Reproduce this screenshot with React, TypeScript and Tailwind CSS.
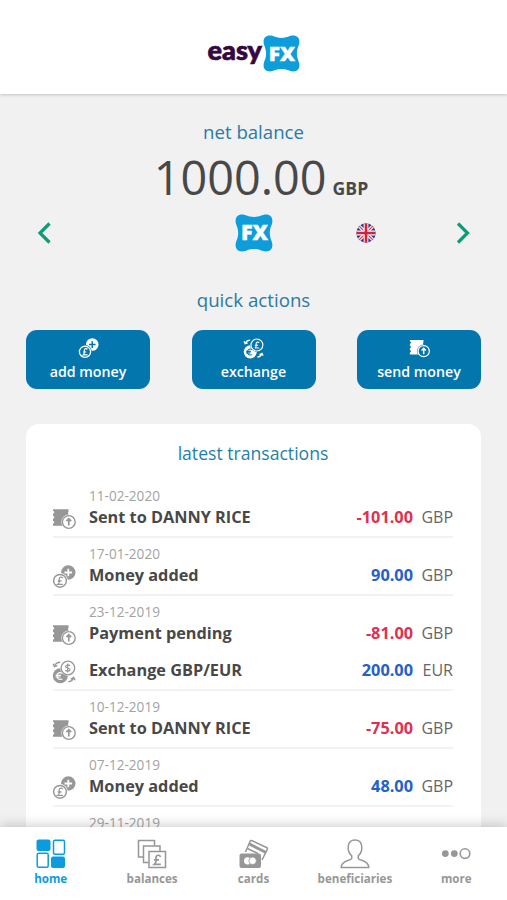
import type { ReactNode } from 'react';

type IconName = 'send' | 'add' | 'exchange';

type Transaction = {
  icon: IconName;
  title: string;
  amount: string;
  currency: string;
};

const groups: { date: string; items: Transaction[] }[] = [
  { date: '11-02-2020', items: [{ icon: 'send', title: 'Sent to DANNY RICE', amount: '-101.00', currency: 'GBP' }] },
  { date: '17-01-2020', items: [{ icon: 'add', title: 'Money added', amount: '90.00', currency: 'GBP' }] },
  {
    date: '23-12-2019',
    items: [
      { icon: 'send', title: 'Payment pending', amount: '-81.00', currency: 'GBP' },
      { icon: 'exchange', title: 'Exchange GBP/EUR', amount: '200.00', currency: 'EUR' },
    ],
  },
  { date: '10-12-2019', items: [{ icon: 'send', title: 'Sent to DANNY RICE', amount: '-75.00', currency: 'GBP' }] },
  { date: '07-12-2019', items: [{ icon: 'add', title: 'Money added', amount: '48.00', currency: 'GBP' }] },
  { date: '29-11-2019', items: [] },
];

function FxBadge({ className }: { className: string }) {
  return (
    <svg viewBox="0 0 38 38" className={className}>
      <path
        d="M7 0.6C11 0.6 13 3 19 3S27 0.6 31 0.6C35 0.6 37.4 3 37.4 7C37.4 11 34.8 13 34.8 19S37.4 27 37.4 31C37.4 35 35 37.4 31 37.4C27 37.4 25 35 19 35S11 37.4 7 37.4C3 37.4 0.6 35 0.6 31C0.6 27 3.2 25 3.2 19S0.6 11 0.6 7C0.6 3 3 0.6 7 0.6Z"
        fill="#0d9ddb"
      />
      <text x="6" y="26.4" textLength="27" lengthAdjust="spacingAndGlyphs" fontFamily="Open Sans, sans-serif" fontWeight="800" fontSize="20.5" fill="#fff" stroke="#fff" strokeWidth="0.4">
        FX
      </text>
    </svg>
  );
}

function UkFlag() {
  return (
    <svg viewBox="0 0 20 20" className="size-5">
      <clipPath id="flag">
        <circle cx="10" cy="10" r="9.7" />
      </clipPath>
      <g clipPath="url(#flag)">
        <rect width="20" height="20" fill="#2f3c8c" />
        <path d="M0 0L20 20M20 0L0 20" stroke="#f3eef3" strokeWidth="3.4" />
        <path d="M0 0L20 20M20 0L0 20" stroke="#d3374f" strokeWidth="1.1" />
        <path d="M10 0V20M0 10H20" stroke="#f8f4f6" strokeWidth="4.8" />
        <path d="M10 0V20M0 10H20" stroke="#d4213d" strokeWidth="2.6" />
      </g>
    </svg>
  );
}

function Chevron({ d }: { d: string }) {
  return (
    <svg viewBox="0 0 16 24" className="h-6 w-4" fill="none">
      <path d={d} stroke="#0f9b78" strokeWidth="3.2" />
    </svg>
  );
}

// bg fills the gaps where one part of a glyph overlaps another
function MoneyIcon({ name, bg, className, symbol = '$' }: { name: IconName; bg: string; className: string; symbol?: string }) {
  if (name === 'send') {
    return (
      <svg viewBox="0 0 24 24" className={className} fill="none">
        <path d="M1 2.2H16.5V5L15.9 6L16.5 7V18.8H1V16.8L2.2 15.8V14.8L1 13.8V11.8L2.2 10.8V9.8L1 8.8V6.8L2.2 5.8V4.8L1 3.8Z" fill="currentColor" />
        <circle cx="16.8" cy="15" r="7.5" fill={bg} />
        <circle cx="16.8" cy="15" r="6.4" stroke="currentColor" strokeWidth="1.4" />
        <path d="M16.8 18.6V12.2M14.4 14.2L16.8 11.8L19.2 14.2" stroke="currentColor" strokeWidth="1.7" />
      </svg>
    );
  }
  if (name === 'add') {
    return (
      <svg viewBox="0 0 24 24" className={className} fill="none">
        <circle cx="16.3" cy="7.5" r="7.2" fill="currentColor" />
        <path d="M16.3 3.7V11.3M12.5 7.5H20.1" stroke={bg} strokeWidth="1.8" />
        <circle cx="8" cy="15.8" r="7.8" fill={bg} />
        <circle cx="8" cy="15.8" r="6.4" stroke="currentColor" strokeWidth="1.5" />
        <path d="M10.7 13.2C10.2 11.7 7.2 11.6 7.2 14C7.2 16 8.1 17.9 5.8 19.3H11M5.7 16H9.5" stroke="currentColor" strokeWidth="1.3" />
      </svg>
    );
  }
  return (
    <svg viewBox="0 0 24 24" className={className} fill="none">
      <circle cx="8.3" cy="15.8" r="7.5" fill="currentColor" />
      <path d="M10.5 13.2C6.3 11.6 5 14 5 16S6.4 20.4 10.5 19M3.6 15.3H9M3.6 17H8.5" stroke={bg} strokeWidth="1.2" />
      <circle cx="15.9" cy="8" r="7.8" fill={bg} />
      <circle cx="15.9" cy="8" r="6.8" stroke="currentColor" strokeWidth="1.3" />
      {symbol === '$' ? (
        <path d="M18 5.8C17.2 4.6 13.4 4.6 13.5 6.5C13.6 8.4 18 7.6 18 9.7C18 11.6 14.2 11.5 13.3 10.1M15.7 3.4V12.6" stroke="currentColor" strokeWidth="1.2" />
      ) : (
        <path d="M18.3 5.7C17.8 4.3 15 4.2 15 6.5C15 8.4 15.8 10.2 13.6 11.4H18.6M13.5 8.2H17.2" stroke="currentColor" strokeWidth="1.2" />
      )}
      <path d="M8.2 2.3C5.6 2.3 3.8 3.6 2.9 5.6M1.2 3.8L2.4 6.7L5.4 5.7" stroke="currentColor" strokeWidth="1.4" />
      <path d="M16.4 21.8C19 21.6 20.7 20.3 21.3 18.3M18.8 19.2L21.7 17.5L23 20.2" stroke="currentColor" strokeWidth="1.4" />
    </svg>
  );
}

function ActionButton({ icon, label }: { icon: IconName; label: string }) {
  return (
    <button className="flex h-[59px] w-[124px] flex-col items-center rounded-[11px] bg-[#0276ad] pt-2 text-white">
      <MoneyIcon name={icon} bg="#0276ad" symbol="£" className="size-[21px]" />
      <span className="mt-[3px] text-[14.2px] leading-5 font-semibold">{label}</span>
    </button>
  );
}

function NavItem({ label, active, children }: { label: string; active?: boolean; children: ReactNode }) {
  return (
    <div className={`flex flex-1 flex-col items-center ${active ? 'text-[#0c9cdd]' : 'text-[#979797]'}`}>
      <svg viewBox="0 0 32 32" className="size-8" fill="none" stroke="currentColor" strokeWidth="1.5">
        {children}
      </svg>
      <span className="mt-px text-[11.6px] leading-4 font-bold">{label}</span>
    </div>
  );
}

export default function App() {
  return (
    <div className="flex h-[900px] w-[507px] flex-col overflow-hidden bg-[#f1f1f1] font-['Open_Sans',sans-serif] text-[#484848]">
      <header className="z-10 flex h-[94px] shrink-0 items-center justify-center bg-white pt-[13px] shadow-[0_1px_3px_rgba(0,0,0,0.2)]">
        <svg viewBox="0 0 56 44" className="h-11 w-14 overflow-visible">
          <text x="0.5" y="28.4" textLength="54.5" lengthAdjust="spacingAndGlyphs" fontFamily="Lato, sans-serif" fontWeight="900" fontSize="27" fill="#35083f" stroke="#35083f" strokeWidth="0.7">
            easy
          </text>
        </svg>
        <FxBadge className="size-[37px]" />
      </header>

      <main className="flex min-h-0 flex-1 flex-col items-center overflow-hidden">
        <h2 className="mt-[26px] text-[18.6px] leading-6 text-[#2b7aa5]">net balance</h2>
        <div className="mt-1 flex h-[60px] items-baseline gap-1.5 pl-[15px]">
          <span className="text-[46.8px] leading-[59px]">1000.00</span>
          <span className="text-[17.6px] font-bold">GBP</span>
        </div>

        <div className="mt-[7px] grid h-[38px] w-full grid-cols-[1fr_38px_1fr] items-center px-9">
          <Chevron d="M13.5 2.5L4 12L13.5 21.5" />
          <FxBadge className="size-[38px]" />
          <div className="flex items-center justify-between pl-[83px]">
            <UkFlag />
            <Chevron d="M3 2.5L12.5 12L3 21.5" />
          </div>
        </div>

        <h2 className="mt-9 text-[18.7px] leading-6 text-[#2b7aa5]">quick actions</h2>
        <div className="mt-[18px] flex w-[455px] justify-between">
          <ActionButton icon="add" label="add money" />
          <ActionButton icon="exchange" label="exchange" />
          <ActionButton icon="send" label="send money" />
        </div>

        <section className="mt-[35px] w-[455px] flex-1 rounded-t-[13px] bg-white pr-7 pl-[27px]">
          <h2 className="pt-[17px] text-center text-[17.6px] leading-6 text-[#1f7fa8]">latest transactions</h2>
          <div className="mt-[15px]">
            {groups.map((group) => (
              <div key={group.date} className="border-b-2 border-[#f2f2f2] pt-[7px]">
                <div className="pl-[36px] text-[13.6px] leading-[18px] text-[#a3a3a3]">{group.date}</div>
                {group.items.map((item, i) => (
                  <div key={item.title} className={`flex h-[31px] items-start ${i > 0 ? 'mt-1.5' : ''}`}>
                    <MoneyIcon name={item.icon} bg="#fff" className="mt-0.5 -ml-px size-6 text-[#979797]" />
                    <span className="ml-[13px] text-[16.3px] leading-6 font-bold">{item.title}</span>
                    <span className={`ml-auto text-[16.3px] leading-6 font-bold ${item.amount.startsWith('-') ? 'text-[#e0304f]' : 'text-[#2460c8]'}`}>
                      {item.amount}
                    </span>
                    <span className="w-10 text-right text-[16px] leading-6 text-[#666]">{item.currency}</span>
                  </div>
                ))}
              </div>
            ))}
          </div>
        </section>
      </main>

      <nav className="z-10 flex h-[73px] shrink-0 bg-white pt-[11px] shadow-[0_-1px_12px_rgba(0,0,0,0.22)]">
        <NavItem label="home" active>
          <rect x="1.5" y="1.5" width="14" height="11.5" rx="2" fill="currentColor" stroke="none" />
          <rect x="18.5" y="2.2" width="11" height="14" rx="1.5" />
          <rect x="2.2" y="15.2" width="11" height="14" rx="1.5" />
          <rect x="16" y="18.5" width="14" height="11.5" rx="2" fill="currentColor" stroke="none" />
        </NavItem>
        <NavItem label="balances">
          <path d="M7 19H2.5V2.5H18.5V7.5" />
          <path d="M12.5 24.5H7.5V8H24V13" />
          <rect x="13" y="13.5" width="16.5" height="16" />
          <path d="M24.5 19C23.7 16.3 19.8 16.8 20 20C20.2 22.5 20.8 24.3 18.3 26.3H24.8M18 21.8H23" strokeWidth="1.7" />
        </NavItem>
        <NavItem label="cards">
          <path d="M7.5 14L12 3.5Q12.7 2 14.2 2.7L28.5 9.5Q30 10.3 29.2 11.7L24 22" />
          <path d="M11.5 6L28 14.5" strokeWidth="3" />
          <path d="M9.5 10.5L20 15.5" />
          <rect x="1.5" y="15.5" width="21.5" height="14.5" rx="2" fill="currentColor" stroke="none" />
          <circle cx="9.6" cy="22.8" r="3.6" fill="#fff" stroke="none" />
          <circle cx="14.6" cy="22.8" r="3.8" fill="#fff" stroke="#979797" strokeWidth="0.8" />
        </NavItem>
        <NavItem label="beneficiaries">
          <path d="M12.7 20.5V17.8C9.8 15.5 8.9 11.5 9.3 8C9.7 4.3 12.3 2 16 2S22.3 4.3 22.7 8C23.1 11.5 22.2 15.5 19.3 17.8V20.5C20.5 23 29.8 22 29.8 29.6H2.2C2.2 22 11.5 23 12.7 20.5Z" />
        </NavItem>
        <NavItem label="more">
          <circle cx="5.3" cy="15.6" r="3.4" fill="currentColor" stroke="none" />
          <circle cx="14.3" cy="15.6" r="3.4" fill="currentColor" stroke="none" />
          <circle cx="25" cy="15.6" r="4.8" strokeWidth="1.6" />
        </NavItem>
      </nav>
    </div>
  );
}
